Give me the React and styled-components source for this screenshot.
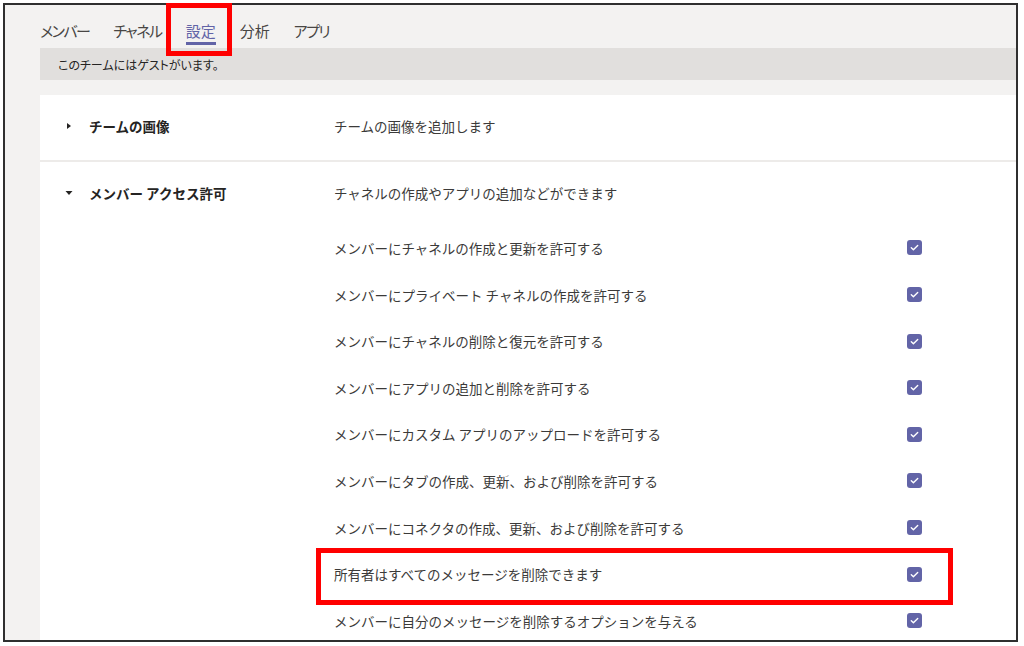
import React from "react";
import styled, { createGlobalStyle, css } from "styled-components";

const Global = createGlobalStyle`
  html, body { margin: 0; padding: 0; background: #ffffff; }
  body { font-family: "Noto Sans CJK JP", "Noto Sans", sans-serif; color: #252423; }
  * { box-sizing: border-box; }
`;

const Frame = styled.div`
  margin: 3px 0 0 3px;
  width: 1015px;
  height: 639px;
  border: 2px solid #2f2f2f;
  background: #f3f2f1;
  display: flex;
  flex-direction: column;
`;

const TabBar = styled.nav`
  display: flex;
  align-items: flex-start;
  gap: 24px;
  height: 43px;
  flex: none;
  padding-left: 35px;
  position: relative;
  z-index: 2;
`;

const Tab = styled.div`
  position: relative;
  padding-top: 16px;
  padding-bottom: 1px;
  font-size: 15px;
  line-height: 20px;
  letter-spacing: ${(p) => (p.$kana ? "-1.5px" : "0")};
  font-feature-settings: "palt";
  color: ${(p) => (p.$active ? "#6264a7" : "#484644")};
  border-bottom: 3px solid ${(p) => (p.$active ? "#6264a7" : "transparent")};
  ${(p) =>
    p.$marked &&
    css`
      &::after {
        content: "";
        position: absolute;
        top: -2px;
        bottom: -14px;
        left: -20px;
        right: -16px;
        border: 5px solid #ff0000;
      }
    `}
`;

const Body = styled.div`
  flex: 1;
  min-height: 0;
  overflow: hidden;
  padding-left: 35px;
`;

const Banner = styled.div`
  height: 32px;
  background: #e1dfdd;
  display: flex;
  align-items: center;
  padding-left: 18px;
  font-size: 12px;
  font-feature-settings: "palt";
  color: #252423;
`;

const Card = styled.section`
  margin-top: 15px;
  background: #ffffff;
`;

const Section = styled.div`
  display: grid;
  grid-template-columns: 294px 588px;
  align-items: start;
  height: ${(p) => (p.$collapsed ? "67px" : "auto")};
  padding-top: 21px;
  border-bottom: ${(p) => (p.$collapsed ? "2px solid #edebe9" : "none")};
`;

const Label = styled.div`
  display: flex;
  align-items: center;
  gap: 16px;
  padding-left: 25px;
  font-size: 13.5px;
  line-height: 20px;
  font-weight: 700;
  color: #252423;
`;

const Caret = styled.span`
  display: inline-flex;
  width: 8px;
  justify-content: center;
`;

const Description = styled.div`
  font-size: 13.5px;
  line-height: 20px;
  color: #3b3a39;
`;

const ItemList = styled.div`
  margin-top: 21.7px;
  display: flex;
  flex-direction: column;
`;

const Item = styled.div`
  position: relative;
  height: 46.6px;
  display: flex;
  align-items: center;
  justify-content: space-between;
  font-size: 13.5px;
  color: #3b3a39;
  ${(p) =>
    p.$marked &&
    css`
      &::after {
        content: "";
        position: absolute;
        top: -3px;
        bottom: -8px;
        left: -18px;
        right: -31px;
        border: 5px solid #ff0000;
      }
    `}
`;

const Box = styled.span`
  width: 15px;
  height: 15px;
  border-radius: 3px;
  background: #6264a7;
  display: inline-flex;
  align-items: center;
  justify-content: center;
`;

const Check = () => (
  <Box>
    <svg width="11" height="11" viewBox="0 0 11 11">
      <path d="M2.3 5.8 L4.4 7.8 L8.7 3.4" fill="none" stroke="#ffffff" strokeWidth="1.4" strokeLinecap="round" strokeLinejoin="round" />
    </svg>
  </Box>
);

const CaretRight = () => (
  <Caret>
    <svg width="6" height="8" viewBox="0 0 6 8"><path d="M1 1 L5 4 L1 7 Z" fill="#252423" /></svg>
  </Caret>
);

const CaretDown = () => (
  <Caret>
    <svg width="8" height="6" viewBox="0 0 8 6"><path d="M0.5 1 L7.5 1 L4 5 Z" fill="#252423" /></svg>
  </Caret>
);

const tabs = [
  { label: "メンバー", kana: true },
  { label: "チャネル", kana: true },
  { label: "設定", active: true },
  { label: "分析" },
  { label: "アプリ", kana: true },
];

const items = [
  "メンバーにチャネルの作成と更新を許可する",
  "メンバーにプライベート チャネルの作成を許可する",
  "メンバーにチャネルの削除と復元を許可する",
  "メンバーにアプリの追加と削除を許可する",
  "メンバーにカスタム アプリのアップロードを許可する",
  "メンバーにタブの作成、更新、および削除を許可する",
  "メンバーにコネクタの作成、更新、および削除を許可する",
  "所有者はすべてのメッセージを削除できます",
  "メンバーに自分のメッセージを削除するオプションを与える",
];

export default function App() {
  return (
    <>
      <Global />
      <Frame>
        <TabBar>
          {tabs.map((t) => (
            <Tab key={t.label} $kana={t.kana} $active={t.active} $marked={t.active}>
              {t.label}
            </Tab>
          ))}
        </TabBar>
        <Body>
          <Banner>このチームにはゲストがいます。</Banner>
          <Card>
            <Section $collapsed>
              <Label>
                <CaretRight />
                チームの画像
              </Label>
              <Description>チームの画像を追加します</Description>
            </Section>
            <Section>
              <Label>
                <CaretDown />
                メンバー アクセス許可
              </Label>
              <div>
                <Description>チャネルの作成やアプリの追加などができます</Description>
                <ItemList>
                  {items.map((text, i) => (
                    <Item key={text} $marked={i === 7}>
                      <span>{text}</span>
                      <Check />
                    </Item>
                  ))}
                </ItemList>
              </div>
            </Section>
          </Card>
        </Body>
      </Frame>
    </>
  );
}
